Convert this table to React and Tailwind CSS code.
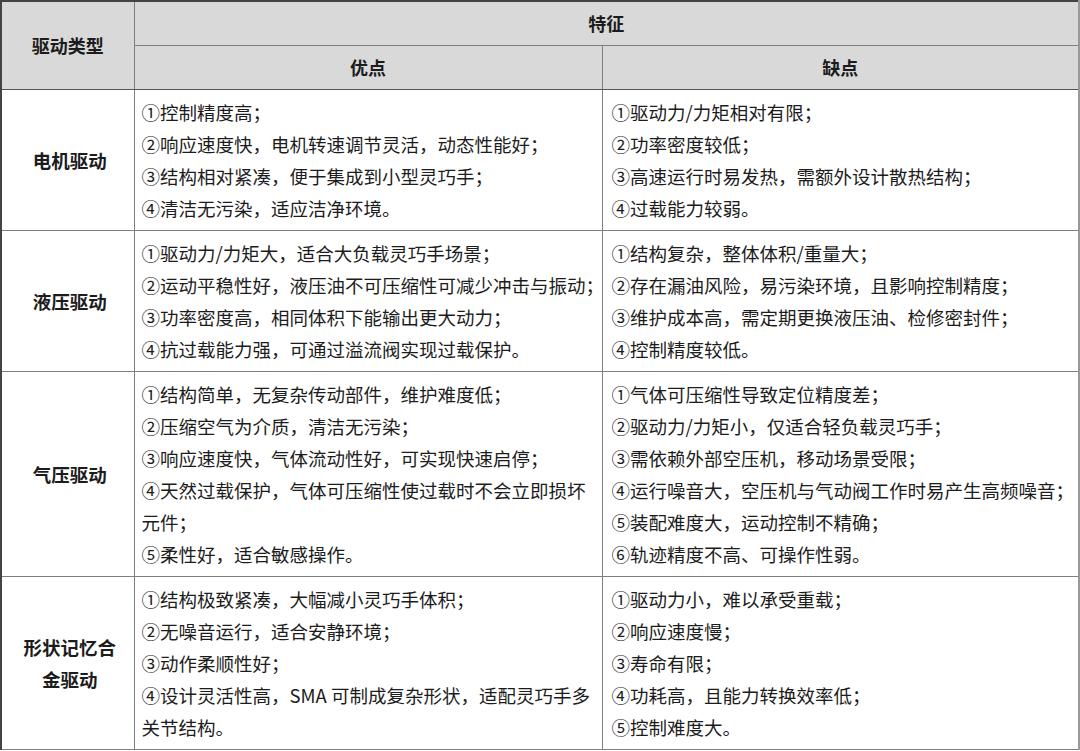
import React from 'react';

const rows = [
  {
    name: ['电机驱动'],
    pros: [
      '①控制精度高；',
      '②响应速度快，电机转速调节灵活，动态性能好；',
      '③结构相对紧凑，便于集成到小型灵巧手；',
      '④清洁无污染，适应洁净环境。',
    ],
    cons: [
      '①驱动力/力矩相对有限；',
      '②功率密度较低；',
      '③高速运行时易发热，需额外设计散热结构；',
      '④过载能力较弱。',
    ],
  },
  {
    name: ['液压驱动'],
    pros: [
      '①驱动力/力矩大，适合大负载灵巧手场景；',
      '②运动平稳性好，液压油不可压缩性可减少冲击与振动；',
      '③功率密度高，相同体积下能输出更大动力；',
      '④抗过载能力强，可通过溢流阀实现过载保护。',
    ],
    cons: [
      '①结构复杂，整体体积/重量大；',
      '②存在漏油风险，易污染环境，且影响控制精度；',
      '③维护成本高，需定期更换液压油、检修密封件；',
      '④控制精度较低。',
    ],
  },
  {
    name: ['气压驱动'],
    pros: [
      '①结构简单，无复杂传动部件，维护难度低；',
      '②压缩空气为介质，清洁无污染；',
      '③响应速度快，气体流动性好，可实现快速启停；',
      '④天然过载保护，气体可压缩性使过载时不会立即损坏',
      '元件；',
      '⑤柔性好，适合敏感操作。',
    ],
    cons: [
      '①气体可压缩性导致定位精度差；',
      '②驱动力/力矩小，仅适合轻负载灵巧手；',
      '③需依赖外部空压机，移动场景受限；',
      '④运行噪音大，空压机与气动阀工作时易产生高频噪音；',
      '⑤装配难度大，运动控制不精确；',
      '⑥轨迹精度不高、可操作性弱。',
    ],
  },
  {
    name: ['形状记忆合', '金驱动'],
    pros: [
      '①结构极致紧凑，大幅减小灵巧手体积；',
      '②无噪音运行，适合安静环境；',
      '③动作柔顺性好；',
      '④设计灵活性高，SMA 可制成复杂形状，适配灵巧手多',
      '关节结构。',
    ],
    cons: [
      '①驱动力小，难以承受重载；',
      '②响应速度慢；',
      '③寿命有限；',
      '④功耗高，且能力转换效率低；',
      '⑤控制难度大。',
    ],
  },
];

function Lines({ items }) {
  return (
    <div className="flex flex-col">
      {items.map((t, i) => (
        <div key={i} className="whitespace-nowrap leading-[32px]">{t}</div>
      ))}
    </div>
  );
}

export default function App() {
  return (
    <div
      className="w-[1080px] h-[751px] bg-white text-[#1c1c1c]"
      style={{ fontFamily: '"Microsoft YaHei", "Noto Sans CJK SC", "Noto Sans", sans-serif' }}
    >
      <table className="table-fixed border-collapse w-[1078px] text-[18.5px] border-t-2 border-l-2 border-t-[#444] border-l-[#444]">
        <colgroup>
          <col className="w-[133px]" />
          <col className="w-[468px]" />
          <col className="w-[477px]" />
        </colgroup>
        <thead>
          <tr className="h-[44px] bg-[#d9d9d9] text-[18px]">
            <th rowSpan={2} className="border border-[#7f7f7f] border-b-[#555] font-bold text-center">驱动类型</th>
            <th colSpan={2} className="border border-[#7f7f7f] border-r-2 border-r-[#999] font-bold text-center">特征</th>
          </tr>
          <tr className="h-[44px] bg-[#d9d9d9] text-[18px]">
            <th className="border border-[#7f7f7f] border-b-[#555] font-bold text-center">优点</th>
            <th className="border border-[#7f7f7f] border-b-[#555] border-r-2 border-r-[#999] font-bold text-center">缺点</th>
          </tr>
        </thead>
        <tbody>
          {rows.map((r, i) => (
            <tr key={i}>
              <td className="border border-[#7f7f7f] text-center align-middle font-bold leading-[32px] pl-1">
                {r.name.map((n, j) => (
                  <div key={j}>{n}</div>
                ))}
              </td>
              <td className="border border-[#7f7f7f] align-top pl-[7px] pr-1 py-[6px]">
                <Lines items={r.pros} />
              </td>
              <td className="border border-[#7f7f7f] border-r-2 border-r-[#999] align-top pl-[9px] pr-1 py-[6px]">
                <Lines items={r.cons} />
              </td>
            </tr>
          ))}
        </tbody>
      </table>
    </div>
  );
}
